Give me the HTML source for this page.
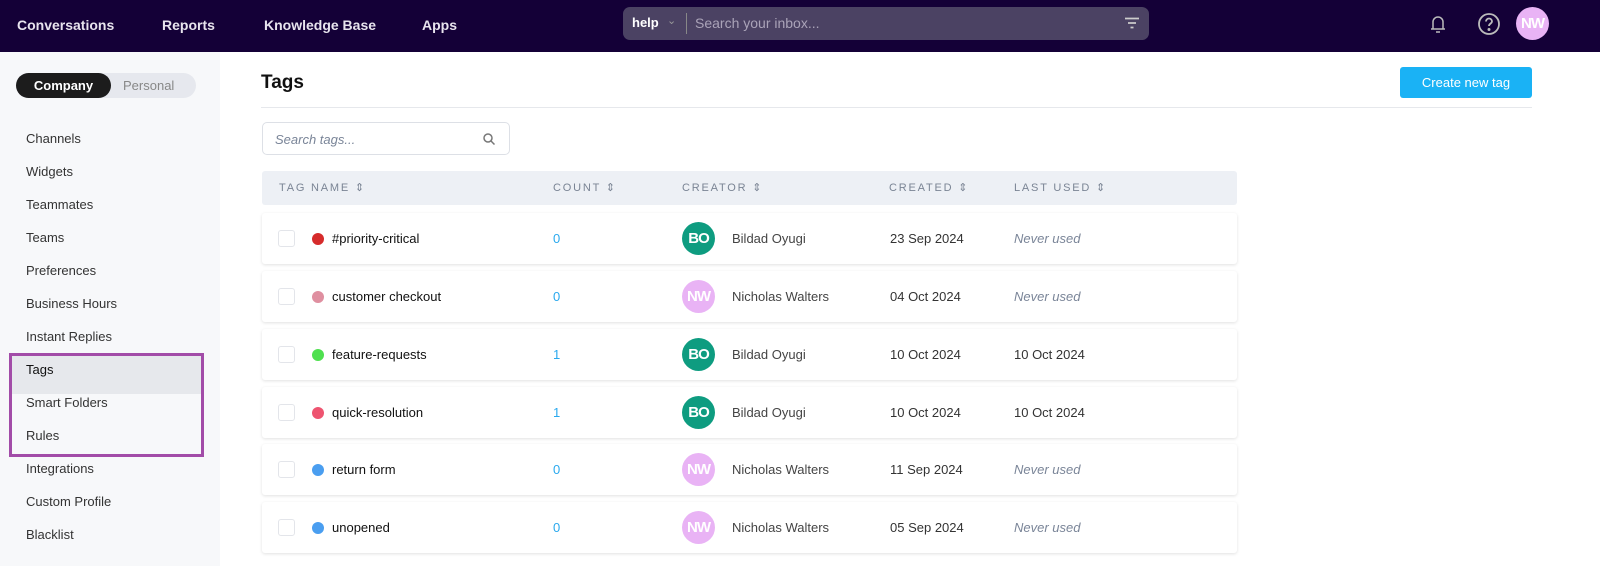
<!DOCTYPE html>
<html><head><meta charset="utf-8"><style>
*{box-sizing:border-box;margin:0;padding:0}
body{width:1600px;height:566px;overflow:hidden;font-family:"Liberation Sans",sans-serif;background:#fff;position:relative}
.top{position:absolute;left:0;top:0;width:1600px;height:52px;background:#140037}
.nav{position:absolute;top:17px;color:#e8e4ee;font-size:14px;font-weight:bold}
.search{position:absolute;left:623px;top:7px;width:526px;height:33px;background:#4b4263;border-radius:7px}
.side{position:absolute;left:0;top:52px;width:220px;height:514px;background:#f7f8fa}
.toggle{position:absolute;left:16px;top:73px;width:180px;height:25px;background:#e6e8ee;border-radius:13px}
.toggle .on{position:absolute;left:0;top:0;width:95px;height:25px;background:#1c1c1c;border-radius:13px;color:#fff;font-size:13px;font-weight:bold;text-align:center;line-height:25px}
.toggle .off{position:absolute;left:107px;top:0;line-height:25px;font-size:13px;color:#888}
.si{position:absolute;left:26px;font-size:13px;color:#333}
.box{position:absolute;left:9px;top:353px;width:195px;height:104px;border:3px solid #a24ca8}
.hl{position:absolute;left:12px;top:356px;width:189px;height:38px;background:#e6e8ec}
h1{position:absolute;left:261px;top:72px;font-size:19px;color:#111}
.btn{position:absolute;left:1400px;top:67px;width:132px;height:31px;background:#1ab2f5;border-radius:3px;color:#fff;font-size:13px;text-align:center;line-height:31px}
.hr{position:absolute;left:261px;top:107px;width:1271px;height:1px;background:#e6e8ec}
.st{position:absolute;left:262px;top:122px;width:248px;height:33px;border:1px solid #dde0e6;border-radius:5px;font-style:italic;color:#7a8598;font-size:13px;padding:9px 12px}
.th{position:absolute;left:262px;top:171px;width:975px;height:34px;background:#edf0f5;border-radius:3px}
.th span{position:absolute;top:10px;font-size:11px;letter-spacing:1.8px;color:#7a8494}
.row{position:absolute;left:262px;width:975px;height:51px;background:#fff;border-radius:3px;box-shadow:0 1px 3px rgba(0,0,0,.12)}
.row *{position:absolute}
.cb{left:16px;top:17px;width:17px;height:17px;border:1px solid #e3e5ea;border-radius:3px}
.dot{left:50px;top:20px;width:12px;height:12px;border-radius:50%}
.nm{left:70px;top:18px;font-size:13px;color:#111}
.ct{left:291px;top:18px;font-size:13px;color:#2aa9ee}
.av{left:420px;top:9px;width:33px;height:33px;border-radius:50%;color:#fff;font-weight:bold;font-size:15px;text-align:center;line-height:33px;letter-spacing:-1px}
.cr{left:470px;top:18px;font-size:13px;color:#444}
.dt{left:628px;top:18px;font-size:13px;color:#333}
.lu{left:752px;top:18px;font-size:13px;color:#333}
.lu.i{font-style:italic;color:#7a8598}
</style></head><body>
<div class="top"></div>
<div class="nav" style="left:17px">Conversations</div>
<div class="nav" style="left:162px">Reports</div>
<div class="nav" style="left:264px">Knowledge Base</div>
<div class="nav" style="left:422px">Apps</div>
<div class="search">
<span style="position:absolute;left:9px;top:8px;color:#fff;font-weight:bold;font-size:13px">help</span>
<span style="position:absolute;left:44px;top:7px;color:#999;font-size:11px">⌄</span>
<div style="position:absolute;left:63px;top:6px;width:1px;height:21px;background:#888"></div>
<span style="position:absolute;left:72px;top:8px;color:#aaa3b8;font-size:14px">Search your inbox...</span>
<svg style="position:absolute;left:502px;top:10px" width="14" height="12"><path d="M0 1.5h14M3 6h8M5.5 10.5h3" stroke="#ccc" stroke-width="1.8"/></svg>
</div>
<svg style="position:absolute;left:1429px;top:13px" width="18" height="22" fill="none" stroke="#bbb" stroke-width="1.5"><path d="M4 16V9a5 5 0 0110 0v7M2 16h14M7 19h4"/></svg>
<svg style="position:absolute;left:1477px;top:12px" width="24" height="24" fill="none" stroke="#bbb" stroke-width="1.8"><circle cx="12" cy="12" r="10"/><path d="M9 9.5a3 3 0 116 0c0 2-3 2-3 4.5"/><circle cx="12" cy="17.5" r=".6" fill="#bbb"/></svg>
<div style="position:absolute;left:1516px;top:7px;width:33px;height:33px;border-radius:50%;background:#e9b3f5;color:#fff;font-weight:bold;font-size:15px;text-align:center;line-height:33px;letter-spacing:-1px">NW</div>
<div class="side"></div>
<div class="toggle"><div class="on">Company</div><div class="off">Personal</div></div>
<div class="hl"></div>
<div class="box"></div>
<div class="si" style="top:131px">Channels</div>
<div class="si" style="top:164px">Widgets</div>
<div class="si" style="top:197px">Teammates</div>
<div class="si" style="top:230px">Teams</div>
<div class="si" style="top:263px">Preferences</div>
<div class="si" style="top:296px">Business Hours</div>
<div class="si" style="top:329px">Instant Replies</div>
<div class="si" style="top:362px;color:#111">Tags</div>
<div class="si" style="top:395px">Smart Folders</div>
<div class="si" style="top:428px">Rules</div>
<div class="si" style="top:461px">Integrations</div>
<div class="si" style="top:494px">Custom Profile</div>
<div class="si" style="top:527px">Blacklist</div>
<h1>Tags</h1>
<div class="btn">Create new tag</div>
<div class="hr"></div>
<div class="st">Search tags...<svg style="position:absolute;left:220px;top:10px" width="12" height="12" fill="none" stroke="#777" stroke-width="1.5"><circle cx="5" cy="5" r="4"/><path d="M8 8l3.5 3.5"/></svg></div>
<div class="th"><span style="left:17px">TAG NAME ⇕</span><span style="left:291px">COUNT ⇕</span><span style="left:420px">CREATOR ⇕</span><span style="left:627px">CREATED ⇕</span><span style="left:752px">LAST USED ⇕</span></div>
<div class="row" style="top:213px"><div class="cb"></div><div class="dot" style="background:#d62b2b"></div><div class="nm">#priority-critical</div><div class="ct">0</div><div class="av" style="background:#0e9c80">BO</div><div class="cr">Bildad Oyugi</div><div class="dt">23 Sep 2024</div><div class="lu i">Never used</div></div>
<div class="row" style="top:271px"><div class="cb"></div><div class="dot" style="background:#df8fa0"></div><div class="nm">customer checkout</div><div class="ct">0</div><div class="av" style="background:#e9b3f5">NW</div><div class="cr">Nicholas Walters</div><div class="dt">04 Oct 2024</div><div class="lu i">Never used</div></div>
<div class="row" style="top:329px"><div class="cb"></div><div class="dot" style="background:#4fe04f"></div><div class="nm">feature-requests</div><div class="ct">1</div><div class="av" style="background:#0e9c80">BO</div><div class="cr">Bildad Oyugi</div><div class="dt">10 Oct 2024</div><div class="lu">10 Oct 2024</div></div>
<div class="row" style="top:387px"><div class="cb"></div><div class="dot" style="background:#ee5470"></div><div class="nm">quick-resolution</div><div class="ct">1</div><div class="av" style="background:#0e9c80">BO</div><div class="cr">Bildad Oyugi</div><div class="dt">10 Oct 2024</div><div class="lu">10 Oct 2024</div></div>
<div class="row" style="top:444px"><div class="cb"></div><div class="dot" style="background:#4a9ef0"></div><div class="nm">return form</div><div class="ct">0</div><div class="av" style="background:#e9b3f5">NW</div><div class="cr">Nicholas Walters</div><div class="dt">11 Sep 2024</div><div class="lu i">Never used</div></div>
<div class="row" style="top:502px"><div class="cb"></div><div class="dot" style="background:#4a9ef0"></div><div class="nm">unopened</div><div class="ct">0</div><div class="av" style="background:#e9b3f5">NW</div><div class="cr">Nicholas Walters</div><div class="dt">05 Sep 2024</div><div class="lu i">Never used</div></div>
</body></html>
